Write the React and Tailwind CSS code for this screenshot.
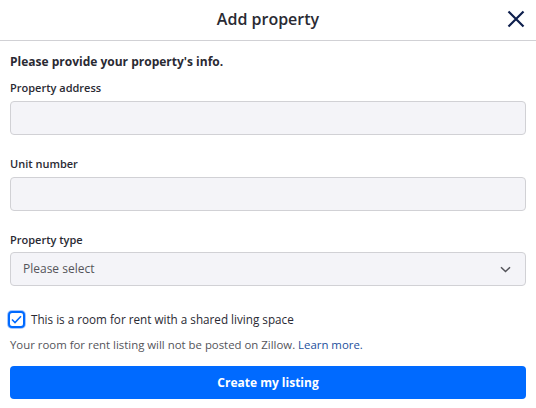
import React from "react";

function Field({ label, children, labelTop }) {
  return (
    <div className={labelTop}>
      <div className="h-[16px] text-[11px] leading-[16px] font-semibold text-[#2a2a33]">{label}</div>
      {children}
    </div>
  );
}

export default function App() {
  return (
    <div className="w-[536px] h-[408px] bg-white overflow-hidden" style={{ fontFamily: '"Open Sans", sans-serif' }}>
      <div className="h-[41px] border-b border-[#d1d1d5] relative flex items-center justify-center">
        <div className="text-[16px] font-semibold text-[#2a2a33] leading-[20px] mt-[-2px]">Add property</div>
        <button className="absolute right-[10px] top-[9px] w-[20px] h-[20px] flex items-center justify-center">
          <svg width="20" height="20" viewBox="0 0 20 20" fill="none">
            <path d="M2.5 2.5L17.5 17.5M17.5 2.5L2.5 17.5" stroke="#0e1f4d" strokeWidth="2.2" strokeLinecap="butt" />
          </svg>
        </button>
      </div>
      <div className="px-[10px]">
        <div className="mt-[13px] h-[16px] text-[12px] leading-[16px] font-bold text-[#2a2a33]">Please provide your property's info.</div>
        <Field label="Property address" labelTop="mt-[10px]">
          <div className="mt-[5px] h-[34px] rounded-[4px] border border-[#d1d1d5] bg-[#f4f4f8]" />
        </Field>
        <Field label="Unit number" labelTop="mt-[21px]">
          <div className="mt-[5px] h-[34px] rounded-[4px] border border-[#d1d1d5] bg-[#f4f4f8]" />
        </Field>
        <Field label="Property type" labelTop="mt-[21px]">
          <div className="mt-[4px] h-[34px] rounded-[4px] border border-[#d1d1d5] bg-[#f4f4f8] flex items-center justify-between pl-[12px] pr-[14px]">
            <span className="text-[12px] text-[#54545a]">Please select</span>
            <svg width="11" height="7" viewBox="0 0 11 7" fill="none">
              <path d="M1 1.2L5.5 5.5L10 1.2" stroke="#54545a" strokeWidth="1.5" />
            </svg>
          </div>
        </Field>
      </div>
      <div className="pl-[8px] pr-[10px] mt-[25px] flex items-center gap-[6px]">
        <div className="w-[17px] h-[17px] rounded-[4px] border-2 border-[#006aff] bg-white flex items-center justify-center shadow-[0_0_0_1px_#a6c8ff]">
          <svg width="11" height="9" viewBox="0 0 11 9" fill="none">
            <path d="M1 4.5L4 7.5L10 1.2" stroke="#006aff" strokeWidth="1.6" />
          </svg>
        </div>
        <span className="text-[11.7px] leading-[17px] text-[#2a2a33]">This is a room for rent with a shared living space</span>
      </div>
      <div className="px-[10px] mt-[9px] text-[11.4px] leading-[16px] text-[#54545a]">
        Your room for rent listing will not be posted on Zillow. <span className="text-[#1c4f9c]">Learn more.</span>
      </div>
      <div className="px-[10px] mt-[13px]">
        <button className="w-full h-[33px] rounded-[4px] bg-[#006aff] text-white text-[12px] font-bold">Create my listing</button>
      </div>
    </div>
  );
}
